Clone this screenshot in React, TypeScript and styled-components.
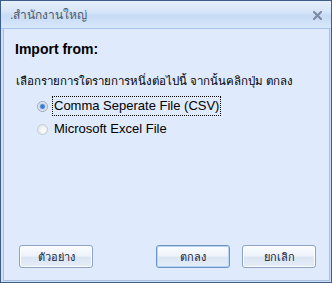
import styled, { createGlobalStyle } from 'styled-components';

const GlobalStyle = createGlobalStyle`
  html, body {
    margin: 0;
    padding: 0;
    background: #ffffff;
  }
  * {
    box-sizing: border-box;
  }
`;

const Window = styled.div`
  width: 332px;
  height: 283px;
  display: flex;
  flex-direction: column;
  border: 1px solid #3d5d8a;
  background: #cfdff5;
  font-family: Tahoma, 'Liberation Sans', 'DejaVu Sans', sans-serif;
`;

const TitleBar = styled.div`
  height: 28px;
  flex-shrink: 0;
  display: flex;
  align-items: center;
  justify-content: space-between;
  padding: 0 9px 0 9px;
  background: linear-gradient(
    to bottom,
    #e6effb 0%,
    #d6e5f8 40%,
    #c6dbf5 55%,
    #d9e8fb 100%
  );
  border-bottom: 1px solid #a6c4ec;
`;

const Title = styled.span`
  font-size: 12px;
  color: #4d5a6c;
`;

const CloseIcon = styled.svg`
  width: 9px;
  height: 9px;
  margin-top: 1px;
`;

const Body = styled.div`
  flex: 1;
  display: flex;
  flex-direction: column;
  margin: 0 1px 1px 2px;
  border: 1px solid #a9c0e2;
  border-top: none;
  background: #dfeafc;
  padding-top: 12px;
`;

const Heading = styled.div`
  padding-left: 11px;
  font-family: 'Liberation Sans', Arial, sans-serif;
  font-weight: bold;
  font-size: 14px;
  color: #000000;
  line-height: 16px;
`;

const Hint = styled.div`
  margin-top: 17px;
  padding-left: 12px;
  font-size: 11.5px;
  color: #000000;
  line-height: 14px;
`;

const Options = styled.div`
  display: flex;
  flex-direction: column;
  gap: 3px;
  margin-top: 8px;
  padding-left: 33px;
`;

const Option = styled.label`
  display: flex;
  align-items: center;
  gap: 4px;
  height: 20px;
  font-family: 'Liberation Sans', Arial, sans-serif;
  font-size: 13px;
  color: #000000;
`;

const Radio = styled.span<{ $checked?: boolean }>`
  width: 11px;
  height: 11px;
  border-radius: 50%;
  flex-shrink: 0;
  border: 1px solid ${p => (p.$checked ? '#9aa8b8' : '#c3cbd4')};
  background: ${p =>
    p.$checked
      ? 'radial-gradient(circle, #2d6fc4 0, #4e8ad6 2px, #c7d7ea 3px, #f3f6fa 5px)'
      : 'radial-gradient(circle at 60% 60%, #ffffff 0, #e7ebf0 5px)'};
`;

const OptionText = styled.span<{ $focused?: boolean }>`
  padding: 1px 1px;
  border: 1px dotted ${p => (p.$focused ? '#000000' : 'transparent')};
  line-height: 16px;
`;

const ButtonRow = styled.div`
  margin-top: auto;
  display: flex;
  align-items: center;
  padding: 0 13px 12px 15px;
`;

const Spacer = styled.div`
  flex: 1;
`;

const Button = styled.button<{ $default?: boolean }>`
  width: 74px;
  height: 23px;
  padding: 0;
  border-radius: 3px;
  border: 1px solid ${p => (p.$default ? '#6f93c4' : '#8ea3bf')};
  background: linear-gradient(
    to bottom,
    #fbfdff 0%,
    #eef3fa 45%,
    #dbe6f4 55%,
    #e4edf8 100%
  );
  box-shadow: ${p =>
    p.$default ? 'inset 0 0 0 1px #b8d4f4' : 'inset 0 0 0 1px #ffffff'};
  font-family: Tahoma, 'Liberation Sans', 'DejaVu Sans', sans-serif;
  font-size: 11px;
  color: #15233b;
  & + & {
    margin-left: 12px;
  }
`;

export default function App() {
  return (
    <>
      <GlobalStyle />
      <Window>
        <TitleBar>
          <Title>.สำนักงานใหญ่</Title>
          <CloseIcon viewBox="0 0 9 9">
            <path
              d="M1 1 L8 8 M8 1 L1 8"
              stroke="#7d8ba0"
              strokeWidth="2.2"
              strokeLinecap="square"
            />
          </CloseIcon>
        </TitleBar>
        <Body>
          <Heading>Import from:</Heading>
          <Hint>เลือกรายการใดรายการหนึ่งต่อไปนี้ จากนั้นคลิกปุ่ม ตกลง</Hint>
          <Options>
            <Option>
              <Radio $checked />
              <OptionText $focused>Comma Seperate File (CSV)</OptionText>
            </Option>
            <Option>
              <Radio />
              <OptionText>Microsoft Excel File</OptionText>
            </Option>
          </Options>
          <ButtonRow>
            <Button>ตัวอย่าง</Button>
            <Spacer />
            <Button $default>ตกลง</Button>
            <Button>ยกเลิก</Button>
          </ButtonRow>
        </Body>
      </Window>
    </>
  );
}
